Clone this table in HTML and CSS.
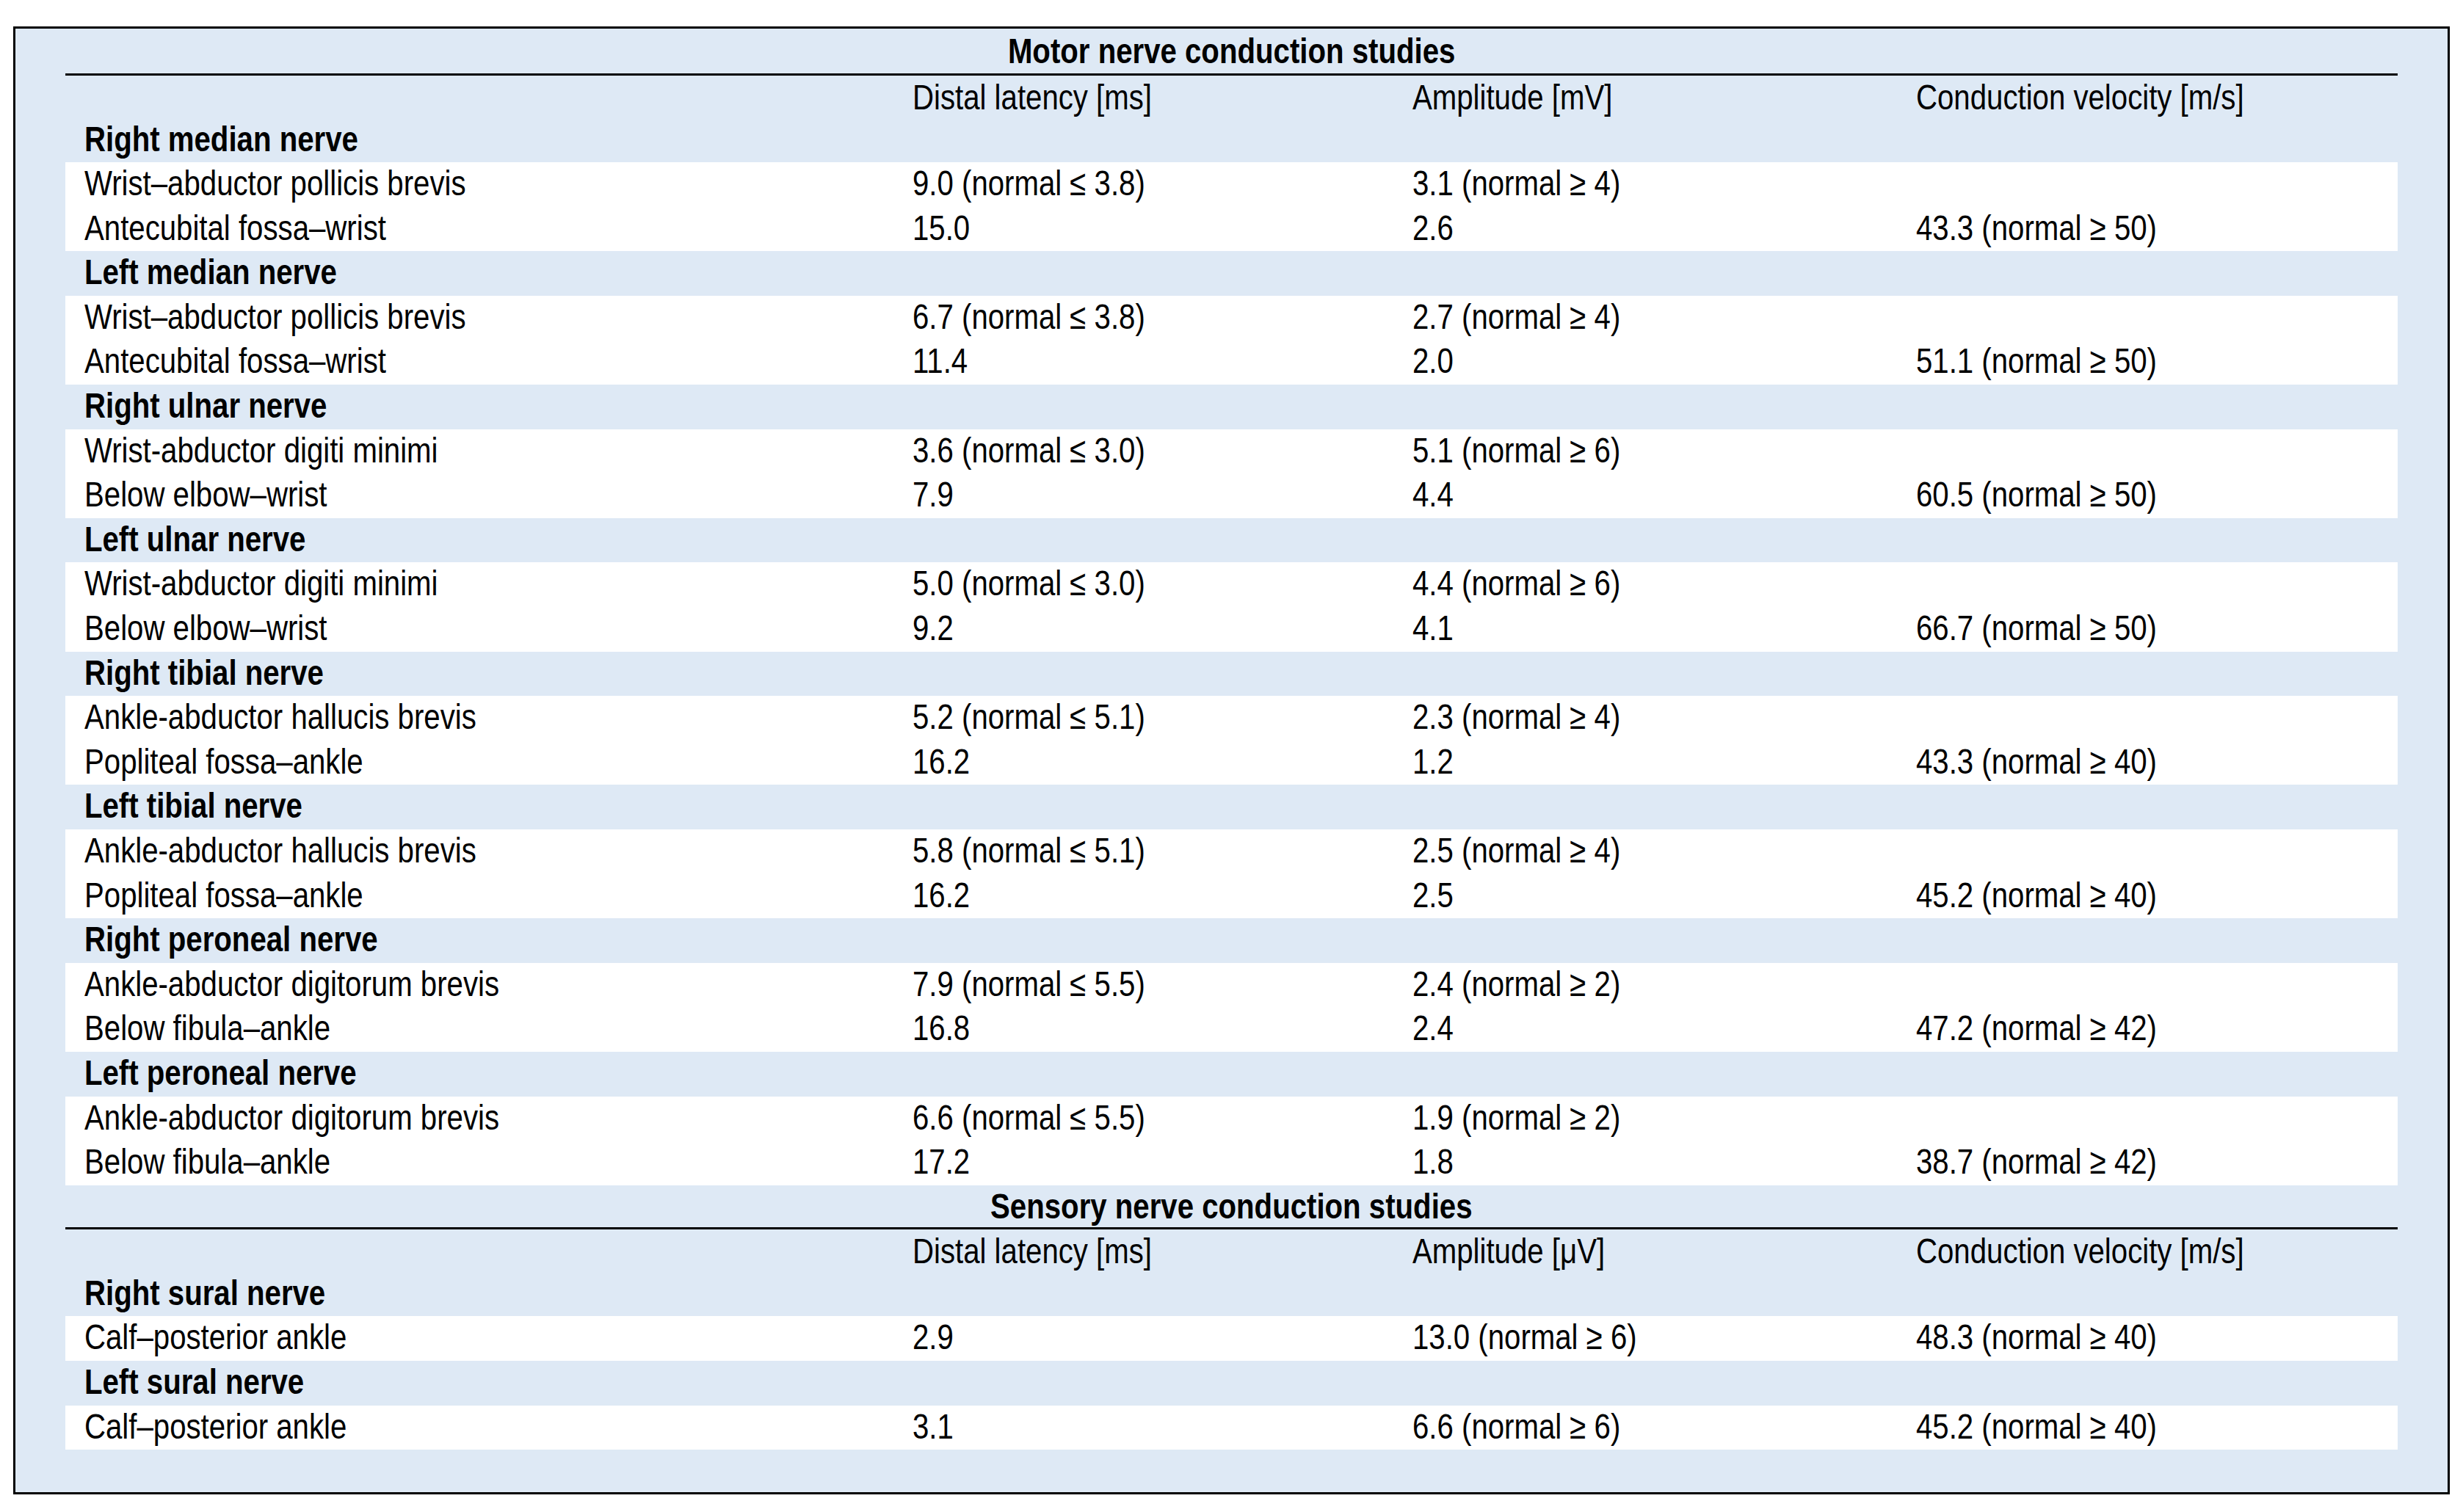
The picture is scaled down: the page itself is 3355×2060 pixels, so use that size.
FILE: index.html
```html
<!DOCTYPE html>
<html lang="en">
<head>
<meta charset="utf-8">
<title>Nerve conduction studies</title>
<link rel="stylesheet" href="styles.css">
</head>
<body>
<div class="frame">
  <section class="study">
    <div class="study-title"><span>Motor nerve conduction studies</span></div>
    <div class="row head"><span></span><span>Distal latency [ms]</span><span>Amplitude [mV]</span><span>Conduction velocity [m/s]</span></div>

    <div class="row group"><span>Right median nerve</span></div>
    <div class="band">
      <div class="row"><span>Wrist–abductor pollicis brevis</span><span>9.0 (normal ≤ 3.8)</span><span>3.1 (normal ≥ 4)</span><span></span></div>
      <div class="row"><span>Antecubital fossa–wrist</span><span>15.0</span><span>2.6</span><span>43.3 (normal ≥ 50)</span></div>
    </div>

    <div class="row group"><span>Left median nerve</span></div>
    <div class="band">
      <div class="row"><span>Wrist–abductor pollicis brevis</span><span>6.7 (normal ≤ 3.8)</span><span>2.7 (normal ≥ 4)</span><span></span></div>
      <div class="row"><span>Antecubital fossa–wrist</span><span>11.4</span><span>2.0</span><span>51.1 (normal ≥ 50)</span></div>
    </div>

    <div class="row group"><span>Right ulnar nerve</span></div>
    <div class="band">
      <div class="row"><span>Wrist-abductor digiti minimi</span><span>3.6 (normal ≤ 3.0)</span><span>5.1 (normal ≥ 6)</span><span></span></div>
      <div class="row"><span>Below elbow–wrist</span><span>7.9</span><span>4.4</span><span>60.5 (normal ≥ 50)</span></div>
    </div>

    <div class="row group"><span>Left ulnar nerve</span></div>
    <div class="band">
      <div class="row"><span>Wrist-abductor digiti minimi</span><span>5.0 (normal ≤ 3.0)</span><span>4.4 (normal ≥ 6)</span><span></span></div>
      <div class="row"><span>Below elbow–wrist</span><span>9.2</span><span>4.1</span><span>66.7 (normal ≥ 50)</span></div>
    </div>

    <div class="row group"><span>Right tibial nerve</span></div>
    <div class="band">
      <div class="row"><span>Ankle-abductor hallucis brevis</span><span>5.2 (normal ≤ 5.1)</span><span>2.3 (normal ≥ 4)</span><span></span></div>
      <div class="row"><span>Popliteal fossa–ankle</span><span>16.2</span><span>1.2</span><span>43.3 (normal ≥ 40)</span></div>
    </div>

    <div class="row group"><span>Left tibial nerve</span></div>
    <div class="band">
      <div class="row"><span>Ankle-abductor hallucis brevis</span><span>5.8 (normal ≤ 5.1)</span><span>2.5 (normal ≥ 4)</span><span></span></div>
      <div class="row"><span>Popliteal fossa–ankle</span><span>16.2</span><span>2.5</span><span>45.2 (normal ≥ 40)</span></div>
    </div>

    <div class="row group"><span>Right peroneal nerve</span></div>
    <div class="band">
      <div class="row"><span>Ankle-abductor digitorum brevis</span><span>7.9 (normal ≤ 5.5)</span><span>2.4 (normal ≥ 2)</span><span></span></div>
      <div class="row"><span>Below fibula–ankle</span><span>16.8</span><span>2.4</span><span>47.2 (normal ≥ 42)</span></div>
    </div>

    <div class="row group"><span>Left peroneal nerve</span></div>
    <div class="band">
      <div class="row"><span>Ankle-abductor digitorum brevis</span><span>6.6 (normal ≤ 5.5)</span><span>1.9 (normal ≥ 2)</span><span></span></div>
      <div class="row"><span>Below fibula–ankle</span><span>17.2</span><span>1.8</span><span>38.7 (normal ≥ 42)</span></div>
    </div>
  </section>

  <section class="study">
    <div class="study-title second"><span>Sensory nerve conduction studies</span></div>
    <div class="row head"><span></span><span>Distal latency [ms]</span><span>Amplitude [μV]</span><span>Conduction velocity [m/s]</span></div>

    <div class="row group"><span>Right sural nerve</span></div>
    <div class="band">
      <div class="row"><span>Calf–posterior ankle</span><span>2.9</span><span>13.0 (normal ≥ 6)</span><span>48.3 (normal ≥ 40)</span></div>
    </div>

    <div class="row group"><span>Left sural nerve</span></div>
    <div class="band">
      <div class="row"><span>Calf–posterior ankle</span><span>3.1</span><span>6.6 (normal ≥ 6)</span><span>45.2 (normal ≥ 40)</span></div>
    </div>
  </section>
</div>
</body>
</html>
```

FILE: styles.css
```css
html, body {
  margin: 0;
  padding: 0;
  background: #ffffff;
}

body {
  font-family: "Liberation Sans Narrow", "Arial Narrow", "Liberation Sans", Arial, sans-serif;
  font-size: 49px;
  color: #000000;
}

.frame {
  box-sizing: border-box;
  width: 3319px;
  height: 2000px;
  margin: 36px 0 0 18px;
  border: 3px solid #000000;
  background: #dee9f5;
  padding: 0 68px 57.6px;
}

.study-title {
  box-sizing: border-box;
  height: 64px;
  line-height: 61px;
  border-bottom: 3px solid #000000;
  text-align: center;
  font-weight: bold;
  white-space: nowrap;
}

.study-title > span {
  display: inline-block;
  transform: scaleX(0.82);
  transform-origin: 50% 50%;
}

.study-title.second {
  height: 60.5px;
  line-height: 57.5px;
}

.row {
  display: grid;
  grid-template-columns: 1128px 681px 686px 682px;
  height: 60.6px;
  line-height: 57.6px;
  white-space: nowrap;
}

/* condensed face (Arial Narrow look) */
.row > span {
  padding-left: 31.7px;
  transform: scaleX(0.82);
  transform-origin: 0 50%;
}

.row.head {
  box-sizing: border-box;
  height: 57.5px;
  padding-top: 2px;
  line-height: 55.5px;
}

.row.group {
  font-weight: bold;
}

.band {
  background: #ffffff;
}
```
